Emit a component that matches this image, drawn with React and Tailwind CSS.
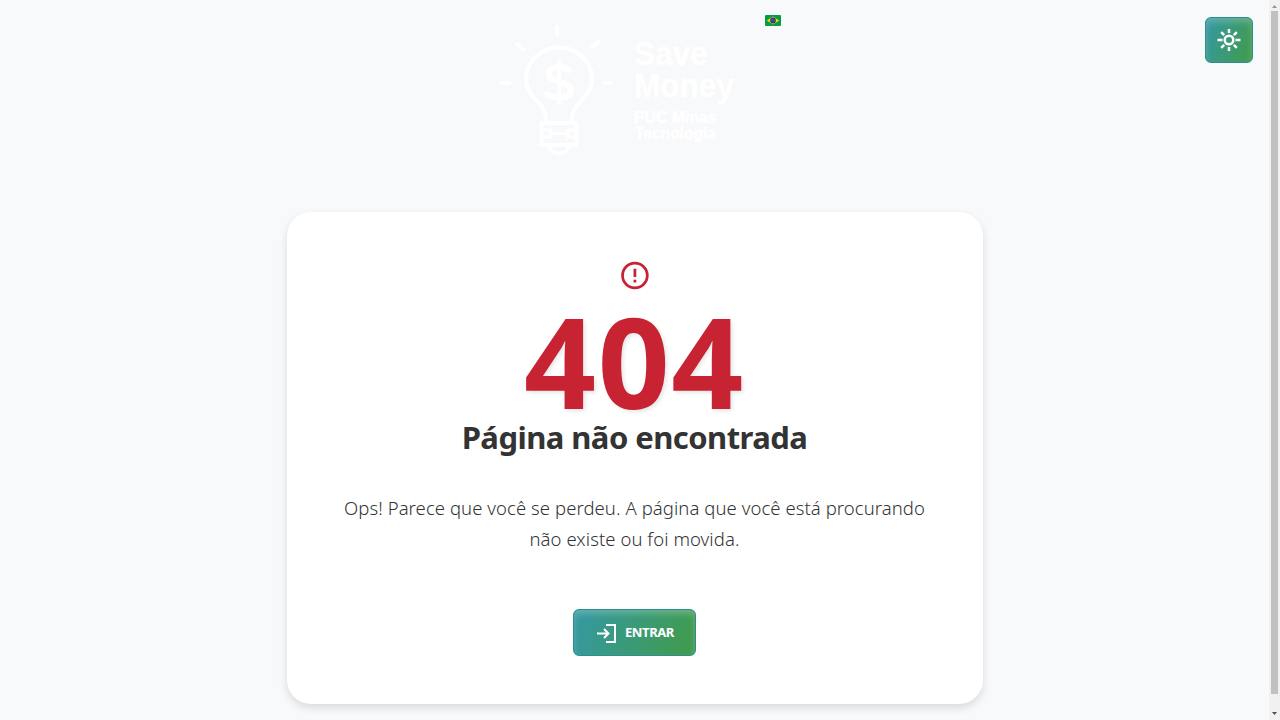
function Logo() {
  return (
    <svg className="h-[150px] w-[250px] shrink-0" viewBox="494 15 250 150" fill="none" stroke="#fff" strokeWidth="4.200" strokeLinecap="round" strokeLinejoin="round">
      <path d="M557 27v7M517.500 44l5.500 5.500M598 42l-5.500 5M502 83h7M604 83h6" />
      <path d="M546 120c0-9-4-14-10-20-6-6-10-12-10-21a33 31.500 0 0 1 66 0c0 9-4 15-10 21-6 6-10 11-10 20" />
      <path d="M541.500 123h35v22h-35z" strokeWidth="4" />
      <path d="M549 147c4 8.500 16 8.500 20 0" strokeWidth="4" />
      <path d="M543 130h7.500v7h-7.500M575 130h-7.500v7h7.500M552 133.500h14" strokeWidth="3.200" />
      <path d="M559 62v41" />
      <path d="M569 70c-7-5-20-4-20 4 0 9 22 7 22 16 0 9-15 10-24 4" strokeWidth="6" />
      <g fill="#fff" strokeWidth="0.400" className="font-['Liberation_Sans',sans-serif] font-bold">
        <text x="634" y="65" fontSize="32.500" textLength="74" lengthAdjust="spacingAndGlyphs">Save</text>
        <text x="634" y="97" fontSize="32.500" textLength="100" lengthAdjust="spacingAndGlyphs">Money</text>
        <text x="634" y="123" fontSize="16" textLength="83" lengthAdjust="spacingAndGlyphs">PUC Minas</text>
        <text x="635" y="139" fontSize="16" textLength="81" lengthAdjust="spacingAndGlyphs">Tecnologia</text>
      </g>
    </svg>
  );
}

function Flag() {
  return (
    <svg className="mt-[15px] h-[11px] w-4" viewBox="0 0 16 11">
      <rect width="16" height="11" rx="1" fill="#079b43" />
      <path d="M8 1.500L14.200 5.500L8 9.500L1.800 5.500z" fill="#fbd50b" />
      <circle cx="8" cy="5.500" r="2.900" fill="#263f87" />
      <path d="M5.800 4.900q2.500-.3 4.600 1.200" stroke="#8fa5b8" strokeWidth=".4" fill="none" />
    </svg>
  );
}

const buttonClass =
  "flex items-center justify-center rounded-[6px] border border-[#2d8d91] bg-[linear-gradient(110deg,#35999b_10%,#409b52_90%)] text-white shadow-[inset_0_4px_6px_rgba(255,255,255,0.22)]";

function Scrollbar() {
  return (
    <div className="flex h-full w-[11px] shrink-0 flex-col items-center bg-[#f1f1f1]">
      <svg className="h-[11px] w-[11px]" viewBox="0 0 11 11">
        <path d="M3 8L5.500 5L8 8z" fill="#969696" />
      </svg>
      <div className="h-[683px] w-[7px] bg-[#c1c1c1]" />
      <div className="grow" />
      <svg className="h-[11px] w-[11px]" viewBox="0 0 11 11">
        <path d="M3 3L5.500 6L8 3z" fill="#505050" />
      </svg>
    </div>
  );
}

export default function App() {
  return (
    <div className="flex h-[720px] w-[1280px] overflow-hidden bg-[#f8f9fb] font-['Noto_Sans','Open_Sans',sans-serif]">
      <div className="flex min-w-0 grow flex-col items-center">
        <header className="flex h-[212px] w-full shrink-0 items-start pl-[494px]">
          <div className="pt-[15px]">
            <Logo />
          </div>
          <div className="ml-[21px]">
            <Flag />
          </div>
          <button aria-label="Tema" className={`${buttonClass} mt-[17px] mr-4 ml-auto h-[46px] w-12`}>
            <svg className="size-6" viewBox="0 0 24 24" fill="none" stroke="currentColor" strokeWidth="2.500">
              <circle cx="12" cy="12" r="4.300" />
              <path d="M12 1v4M12 19v4M.5 12h5M18.500 12h5M4.200 4.200l3 3M16.800 16.800l3 3M4.200 19.800l3-3M16.800 7.200l3-3" />
            </svg>
          </button>
        </header>
        <main className="flex h-[492px] w-[696px] shrink-0 flex-col items-center rounded-[24px] bg-white pt-[47px] shadow-[0_4px_8px_rgba(0,0,0,0.12)]">
          <svg className="size-[33px] shrink-0" viewBox="-0.300 0 24 24" fill="#c82333">
            <path d="M11 15h2v2h-2zm0-8h2v6h-2zm1-5C6.470 2 2 6.500 2 12a10 10 0 1 0 10-10m0 18a8 8 0 1 1 0-16 8 8 0 0 1 0 16" />
          </svg>
          <div className="mt-[4px] h-[128px] text-[126px] leading-[128px] font-bold tracking-[1.6px] whitespace-nowrap text-[#c82333] [text-shadow:2px_2px_4px_rgba(0,0,0,0.1)]">404</div>
          <h1 className="-mt-[6px] h-[38px] text-[31px] leading-[38px] font-bold tracking-[-0.55px] whitespace-nowrap text-[#333]">Página não encontrada</h1>
          <p className="mt-[36px] text-center text-[18.500px] leading-[31px] font-light tracking-[0.07px] whitespace-nowrap text-[#333]">
            Ops! Parece que você se perdeu. A página que você está procurando
            <br />
            não existe ou foi movida.
          </p>
          <button className={`${buttonClass} mt-[55px] h-[47px] w-[123px] gap-[6px] text-[13px] font-bold tracking-[-0.4px]`}>
            <svg className="size-6" viewBox="0 0 24 24" fill="none" stroke="currentColor" strokeWidth="2">
              <path d="M11 4h9v17h-9M2 12.500h11M9 8l4.500 4.500L9 17" />
            </svg>
            ENTRAR
          </button>
        </main>
      </div>
      <Scrollbar />
    </div>
  );
}
